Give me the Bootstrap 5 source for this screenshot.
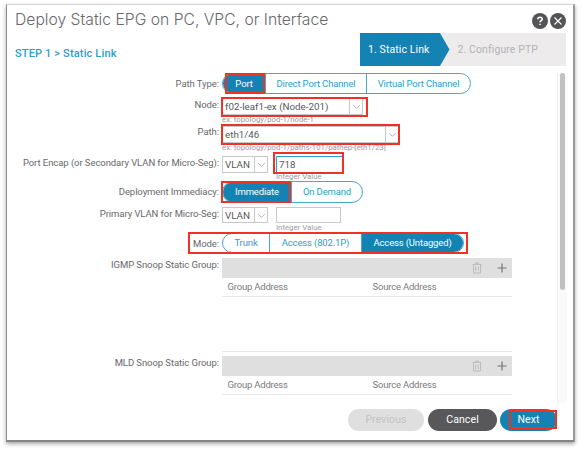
<!DOCTYPE html>
<html lang="en">
<head>
    <meta charset="UTF-8">
    <meta name="viewport" content="width=device-width, initial-scale=1.0">
    <title>Deploy Static EPG</title>
    <link href="https://cdn.jsdelivr.net/npm/bootstrap@5.3.0/dist/css/bootstrap.min.css" rel="stylesheet">
    <style>
        body {
            font-family: Roboto, "Liberation Sans", sans-serif;
            font-size: 9.5px;
            line-height: 12px;
            color: #68686b;
            height: 450px;
            overflow: hidden;
            padding: 4px 7px 8px 6px;
        }
        .dialog-box {
            height: 438px;
            border: 1px solid #8d8d8d;
            border-top-color: #d5d5d5;
            border-right: 2px solid #999;
            border-bottom: 2px solid #858585;
            box-shadow: 0 2px 4px rgba(0, 0, 0, .35);
        }
        .dialog-title {
            font-family: Inter, sans-serif;
            font-size: 15.7px;
            line-height: 20px;
            font-weight: 300;
            color: #68686b;
            padding: 5px 7px 2px 8px;
            height: 28px;
        }
        .dialog-title span { white-space: nowrap; }
        .dialog-title svg { width: 16px; height: 16px; }
        .step-bar { height: 33px; padding: 0 7px 0 8px; }
        .step-name { font-size: 11px; font-weight: 500; color: #2ba0cb; padding-top: 15px; letter-spacing: .15px; }
        .wizard { width: 206px; background: #edebec; font-size: 10.5px; letter-spacing: .1px; color: #b4b2b4; }
        .wizard-on {
            width: 89.5px;
            background: #1483b3;
            color: #fff;
            padding-left: 8px;
            clip-path: polygon(0 0, 80px 0, 100% 50%, 80px 100%, 0 100%);
        }
        .wizard-off { padding-left: 8px; }

        /* Form rows: label column on the left, control on the right */
        .form-area { height: 330px; margin-top: 7px; }
        .form-fields { width: 550px; }
        .field-label { width: 212px; text-align: right; margin-right: 3px; padding-top: 1px; white-space: nowrap; letter-spacing: -.07px; }
        .label-low { padding-top: 5px; }
        .pills {
            height: 21px;
            border: 1px solid #45a8cd;
            border-radius: 11px;
            color: #2ba0cb;
            letter-spacing: -.15px;
            overflow: hidden;
        }
        .pills > div {
            display: flex;
            align-items: center;
            justify-content: center;
            white-space: nowrap;
            border-right: 1px solid #45a8cd;
        }
        .pills > div:last-child { border-right: 0; }
        .pills > .picked { background: #1483b3; color: #fff; }
        .combo {
            height: 17px;
            line-height: 15px;
            border: 1px solid #c8c8c8;
            font-size: 9.8px;
            color: #58585b;
            padding-left: 2px;
            white-space: nowrap;
        }
        .combo svg { width: 13px; height: 15px; border-left: 1px solid #c8c8c8; }
        .hint { font-size: 7.8px; line-height: 9px; color: #9b9b9d; white-space: nowrap; }

        /* Red callout frames around the fields */
        .callout { position: relative; }
        .callout::after {
            content: "";
            position: absolute;
            inset: -1px;
            border: 2px solid #f03224;
        }
        .callout-wide::after { inset: 0 -5px 0 -1px; }
        .callout-input::after { inset: -4px -1px -1px -3px; }
        .callout-port::after { inset: -1px 0 -1px 2px; }
        .callout-now::after { inset: -1px 0 -1px -2px; }
        .callout-mode::after { inset: -1px -4px -1px -34px; }
        .callout-next::after { inset: 1px 0 2px 9px; }

        .group-bar { height: 20px; background: #dfdfdf; padding-right: 4px; gap: 13px; }
        .group-head { height: 19px; border-bottom: 1px solid #e8e8e8; color: #7a7a7c; letter-spacing: -.2px; }
        .group-head div { width: 145px; padding-left: 5.5px; }
        .group-list { width: 290px; }
        .group-open { height: 94px; border-bottom: 1px solid #e8e8e8; }
        .scroll-track { width: 10px; background: #fafafa; border-left: 1px solid #f0f0f0; padding-left: 2px; }
        .scroll-thumb { width: 5px; height: 217px; border-radius: 3px; background: #c1c1c1; }
        .dialog-foot { padding: 6px 16px 0 0; font-size: 10.5px; letter-spacing: .1px; }
        .foot-btn {
            height: 22px;
            border-radius: 11px;
            display: flex;
            align-items: center;
            justify-content: center;
            color: #fff;
        }
    </style>
</head>
<body>
    <div class="dialog-box bg-white">
        <div class="dialog-title d-flex justify-content-between">
            <span>Deploy Static EPG on PC, VPC, or Interface</span>
            <div class="d-flex align-items-center" style="gap: 2px">
                <svg viewBox="0 0 16 16"><circle cx="8" cy="8" r="8" fill="#545457"/><path d="M5.8 6.3Q5.9 4.2 8 4.2Q10.3 4.3 10.2 6.2Q10.1 7.2 9 7.8Q8.1 8.3 8.1 9.3M8.1 10.7V12" fill="none" stroke="#fff" stroke-width="1.6"/></svg>
                <svg viewBox="0 0 16 16"><circle cx="8" cy="8" r="8" fill="#545457"/><path d="M4.5 4.5L11.5 11.5M11.5 4.5L4.5 11.5" fill="none" stroke="#fff" stroke-width="1.1"/></svg>
            </div>
        </div>

        <div class="step-bar d-flex justify-content-between">
            <div class="step-name">STEP 1 &gt; Static Link</div>
            <div class="wizard d-flex">
                <div class="wizard-on d-flex align-items-center">1. Static Link</div>
                <div class="wizard-off d-flex align-items-center">2. Configure PTP</div>
            </div>
        </div>

        <div class="form-area d-flex">
            <div class="form-fields">
                <div class="d-flex" style="height: 25px">
                    <div class="field-label label-low">Path Type:</div>
                    <div class="pills d-flex overflow-visible" style="width: 249px">
                        <div class="picked callout callout-port rounded-start-pill" style="width: 43px">Port</div>
                        <div style="width: 101px">Direct Port Channel</div>
                        <div style="width: 103px">Virtual Port Channel</div>
                    </div>
                </div>

                <div class="d-flex" style="height: 27px">
                    <div class="field-label">Node:</div>
                    <div>
                        <div class="callout callout-wide" style="margin-top: -1px; height: 20px; padding-top: 1px">
                            <div class="combo d-flex justify-content-between" style="width: 141px">
                                <span>f02-leaf1-ex (Node-201)</span>
                                <svg viewBox="0 0 13 15"><path d="M3.5 6L7 9.5L10.5 6" fill="none" stroke="#aaa"/></svg>
                            </div>
                        </div>
                        <div class="hint" style="margin-top: -2px">ex: topology/pod-1/node-1</div>
                    </div>
                </div>

                <div class="d-flex" style="height: 31px">
                    <div class="field-label">Path:</div>
                    <div>
                        <div class="callout" style="height: 19px; padding-top: 1px">
                            <div class="combo d-flex justify-content-between" style="width: 177px">
                                <span>eth1/46</span>
                                <svg viewBox="0 0 13 15"><path d="M3.5 6L7 9.5L10.5 6" fill="none" stroke="#aaa"/></svg>
                            </div>
                        </div>
                        <div class="hint" style="margin-top: -1px">ex: topology/pod-1/paths-101/pathep-[eth1/23]</div>
                    </div>
                </div>

                <div class="d-flex" style="height: 25px">
                    <div class="field-label">Port Encap (or Secondary VLAN for Micro-Seg):</div>
                    <div class="combo d-flex justify-content-between" style="width: 46px">
                        <span>VLAN</span>
                        <svg viewBox="0 0 13 15"><path d="M3.5 6L7 9.5L10.5 6" fill="none" stroke="#aaa"/></svg>
                    </div>
                    <div style="margin-left: 8px">
                        <div class="callout callout-input">
                            <div class="combo" style="width: 67px; border-color: #2ba0cb">718</div>
                        </div>
                        <div class="hint" style="margin-top: -1px">Integer Value</div>
                    </div>
                </div>

                <div class="d-flex" style="height: 26px">
                    <div class="field-label label-low">Deployment Immediacy:</div>
                    <div class="pills d-flex overflow-visible" style="width: 141px; height: 22px">
                        <div class="picked callout callout-now rounded-start-pill" style="width: 69px">Immediate</div>
                        <div style="width: 70px">On Demand</div>
                    </div>
                </div>

                <div class="d-flex" style="height: 26px">
                    <div class="field-label">Primary VLAN for Micro-Seg:</div>
                    <div class="combo d-flex justify-content-between" style="width: 46px; height: 16px">
                        <span>VLAN</span>
                        <svg viewBox="0 0 13 15"><path d="M3.5 6L7 9.5L10.5 6" fill="none" stroke="#aaa"/></svg>
                    </div>
                    <div style="margin-left: 8px">
                        <div class="combo" style="width: 65px; height: 16px"></div>
                        <div class="hint">Integer Value</div>
                    </div>
                </div>

                <div class="d-flex" style="height: 25px">
                    <div class="field-label label-low">Mode:</div>
                    <div class="callout callout-mode" style="height: 20px">
                        <div class="pills d-flex" style="width: 242px; height: 20px">
                            <div style="width: 47px">Trunk</div>
                            <div style="width: 92px">Access (802.1P)</div>
                            <div class="picked" style="width: 101px">Access (Untagged)</div>
                        </div>
                    </div>
                </div>

                <div class="d-flex" style="height: 98px">
                    <div class="field-label">IGMP Snoop Static Group:</div>
                    <div class="group-list group-open">
                        <div class="group-bar d-flex align-items-center justify-content-end">
                            <svg width="12" height="12" viewBox="0 0 12 12"><path d="M1.5 2.5H10.5M4.5 2.5V1H7.5V2.5M2.5 2.5V11H9.5V2.5M4.7 4.5V9.2M7.3 4.5V9.2" fill="none" stroke="#bcbcbc"/></svg>
                            <svg width="12" height="12" viewBox="0 0 12 12"><path d="M6 1.5V10.5M1.5 6H10.5" stroke="#77777a" stroke-width="1.2"/></svg>
                        </div>
                        <div class="group-head d-flex align-items-center"><div>Group Address</div><div>Source Address</div></div>
                    </div>
                </div>

                <div class="d-flex">
                    <div class="field-label">MLD Snoop Static Group:</div>
                    <div class="group-list">
                        <div class="group-bar d-flex align-items-center justify-content-end">
                            <svg width="12" height="12" viewBox="0 0 12 12"><path d="M1.5 2.5H10.5M4.5 2.5V1H7.5V2.5M2.5 2.5V11H9.5V2.5M4.7 4.5V9.2M7.3 4.5V9.2" fill="none" stroke="#bcbcbc"/></svg>
                            <svg width="12" height="12" viewBox="0 0 12 12"><path d="M6 1.5V10.5M1.5 6H10.5" stroke="#77777a" stroke-width="1.2"/></svg>
                        </div>
                        <div class="group-head d-flex align-items-center"><div>Group Address</div><div>Source Address</div></div>
                    </div>
                </div>
            </div>
            <div class="scroll-track"><div class="scroll-thumb"></div></div>
        </div>

        <div class="dialog-foot d-flex justify-content-end">
            <div class="foot-btn" style="width: 76px; background: #dfdfdf; color: #c3c3c3; margin-right: 4px">Previous</div>
            <div class="foot-btn" style="width: 69px; background: #58585b; margin-right: 3px">Cancel</div>
            <div class="foot-btn callout callout-next" style="width: 57px; background: #1483b3">Next</div>
        </div>
    </div>

<script src="https://cdn.jsdelivr.net/npm/bootstrap@5.3.0/dist/js/bootstrap.bundle.min.js"></script>
</body>
</html>
